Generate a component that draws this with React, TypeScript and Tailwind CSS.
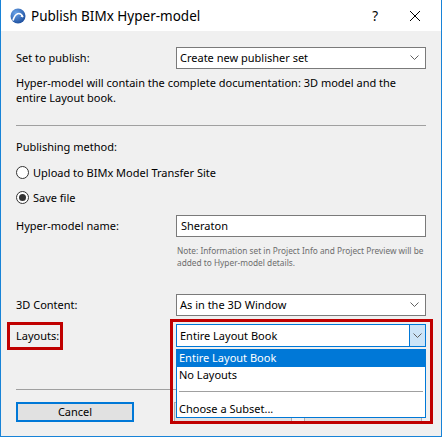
import React from 'react'

function Chevron() {
  return (
    <svg width="9" height="6" viewBox="0 0 9 6" className="shrink-0">
      <polyline points="0.5,0.5 4.5,4.5 8.5,0.5" fill="none" stroke="#606060" strokeWidth="1" />
    </svg>
  )
}

function Select({ value }: { value: string }) {
  return (
    <div className="flex items-center justify-between w-[250px] h-[22px] bg-white border border-[#7a7a7a] pl-[3px] pr-[6px]">
      <span>{value}</span>
      <Chevron />
    </div>
  )
}

function Radio({ checked, label }: { checked?: boolean; label: string }) {
  return (
    <div className="flex items-center h-[25px] gap-[4px]">
      <span className="flex items-center justify-center w-[13px] h-[13px] rounded-full border border-[#333] bg-white">
        {checked && <span className="w-[7px] h-[7px] rounded-full bg-[#333]" />}
      </span>
      <span>{label}</span>
    </div>
  )
}

function AppIcon() {
  return (
    <svg width="16" height="16" viewBox="0 0 16 16">
      <defs>
        <radialGradient id="g" cx="35%" cy="30%" r="75%">
          <stop offset="0" stopColor="#6aa3e8" />
          <stop offset="1" stopColor="#1d4f9e" />
        </radialGradient>
      </defs>
      <circle cx="8" cy="8" r="7.5" fill="url(#g)" />
      <path d="M3 12.5 C 5 5, 10 3, 13 9" fill="none" stroke="#fff" strokeWidth="1.6" />
      <path d="M12 6.5 L 13.2 9.5 L 10.5 8.6" fill="#fff" />
    </svg>
  )
}

export default function App() {
  return (
    <div className="relative w-[442px] h-[437px] flex flex-col border border-t-0 border-[#1883d7] bg-[#f0f0f0] text-[11px] text-black font-['Noto_Sans',sans-serif] leading-[16px] overflow-hidden">
      {/* title bar */}
      <div className="flex items-center h-[31px] shrink-0 bg-white pl-[9px]">
        <AppIcon />
        <span className="ml-[5px] text-[13.5px]">Publish BIMx Hyper-model</span>
        <span className="ml-auto text-[13.5px] mr-[31px]">?</span>
        <svg width="12" height="12" viewBox="0 0 12 12" className="mr-[20px]">
          <path d="M1 1 L11 11 M11 1 L1 11" stroke="#000" strokeWidth="1" />
        </svg>
      </div>

      {/* body */}
      <div className="flex-1 flex flex-col px-[15px]">
        <div className="flex items-center mt-[16px]">
          <span className="w-[160px]">Set to publish:</span>
          <Select value="Create new publisher set" />
        </div>
        <p className="mt-[6px] leading-[15px] whitespace-nowrap">
          Hyper-model will contain the complete documentation: 3D model and the<br />
          entire Layout book.
        </p>

        <div className="mt-[20px] h-px bg-[#a0a0a0] w-[410px]" />

        <div className="mt-[13px]">Publishing method:</div>
        <div className="mt-[5px]">
          <Radio label="Upload to BIMx Model Transfer Site" />
          <Radio checked label="Save file" />
        </div>

        <div className="flex items-center mt-[5px]">
          <span className="w-[160px]">Hyper-model name:</span>
          <div className="w-[250px] h-[22px] bg-white border border-[#7a7a7a] pl-[4px] flex items-center">Sheraton</div>
        </div>
        <p className="ml-[161px] mt-[8px] text-[8.3px] leading-[12px] text-[#6d6d6d] whitespace-nowrap">
          Note: Information set in Project Info and Project Preview will be<br />
          added to Hyper-model details.
        </p>

        <div className="flex items-center mt-[25px]">
          <span className="w-[160px]">3D Content:</span>
          <Select value="As in the 3D Window" />
        </div>

        <div className="flex items-center mt-[8px]">
          <span className="w-[160px]">Layouts:</span>
          <div className="flex items-center justify-between w-[250px] h-[23px] bg-white border border-[#0078d7] pl-[3px]">
            <span>Entire Layout Book</span>
            <span className="flex items-center justify-center w-[16px] h-full bg-[#cce4f7] border-l border-[#0078d7]">
              <Chevron />
            </span>
          </div>
        </div>

        <div className="mt-[42px] h-px bg-[#a0a0a0] w-[410px]" />

        {/* buttons; the two on the right sit under the open list */}
        <div className="flex mt-[12px] gap-[12px]">
          <button className="w-[118px] h-[20px] bg-[#e1e1e1] border-2 border-[#0078d7] mr-[28px]">Cancel</button>
          <div className="w-[118px] h-[20px] bg-[#e1e1e1] border border-[#adadad]" />
          <div className="w-[118px] h-[20px] bg-[#e1e1e1] border border-[#adadad]" />
        </div>
      </div>

      {/* open dropdown list */}
      <div className="absolute left-[175px] top-[349px] w-[250px] h-[69px] bg-white border border-[#0078d7] flex flex-col">
        <div className="h-[17px] bg-[#0078d7] text-white pl-[2px] flex items-center">Entire Layout Book</div>
        <div className="h-[17px] pl-[2px] flex items-center">No Layouts</div>
        <div className="h-[17px] flex items-center px-[2px]">
          <div className="h-px w-full bg-[#a0a0a0]" />
        </div>
        <div className="h-[17px] pl-[2px] flex items-center">Choose a Subset...</div>
      </div>

      {/* annotation boxes */}
      <div className="absolute left-[6px] top-[322px] w-[56px] h-[28px] border-[3px] border-[#c00000]" />
      <div className="absolute left-[169px] top-[319px] w-[263px] h-[105px] border-[3px] border-[#c00000]" />
    </div>
  )
}
